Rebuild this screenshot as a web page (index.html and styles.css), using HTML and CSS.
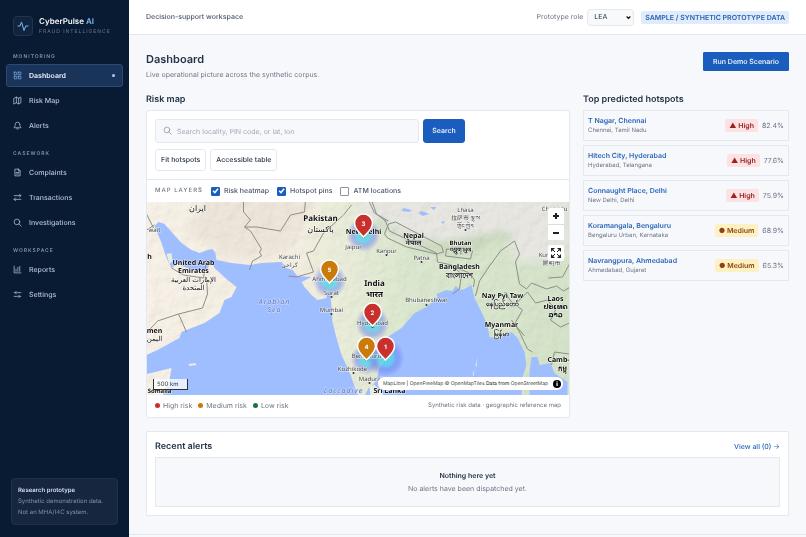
FILE: index.html
```html
<!DOCTYPE html>
<html lang="en">
<head>
<meta charset="utf-8">
<meta name="viewport" content="width=device-width, initial-scale=1">
<title>CyberPulse AI – Dashboard</title>
<link rel="stylesheet" href="styles.css">
</head>
<body>
<div class="app">
  <aside class="sidebar">
    <div class="brand">
      <span class="brand-mark"><svg class="icon" viewBox="0 0 24 24"><path d="M2 12h4l3-8 5 17 3.500-9H22"/></svg></span>
      <div>
        <div class="brand-name">CyberPulse <span>AI</span></div>
        <div class="brand-tag">FRAUD INTELLIGENCE</div>
      </div>
    </div>
    <nav>
      <section class="nav-group">
        <h2>MONITORING</h2>
        <a class="nav-item active" href="#"><svg class="icon" viewBox="0 0 24 24"><rect x="3" y="3" width="7" height="7" rx="1"/><rect x="14" y="3" width="7" height="7" rx="1"/><rect x="3" y="14" width="7" height="7" rx="1"/><rect x="14" y="14" width="7" height="7" rx="1"/></svg>Dashboard<i class="dot"></i></a>
        <a class="nav-item" href="#"><svg class="icon" viewBox="0 0 24 24"><path d="M3 6l6-3 6 3 6-3v15l-6 3-6-3-6 3zM9 3v15M15 6v15"/></svg>Risk Map</a>
        <a class="nav-item" href="#"><svg class="icon" viewBox="0 0 24 24"><path d="M18 9a6 6 0 0 0-12 0c0 6-3 7-3 9h18c0-2-3-3-3-9M10 21h4"/></svg>Alerts</a>
      </section>
      <section class="nav-group">
        <h2>CASEWORK</h2>
        <a class="nav-item" href="#"><svg class="icon" viewBox="0 0 24 24"><path d="M14 3H5v18h14V8zM14 3v5h5M8 12h8M8 16h8"/></svg>Complaints</a>
        <a class="nav-item" href="#"><svg class="icon" viewBox="0 0 24 24"><path d="M3 7h18M17 3l4 4-4 4M21 17H3M7 13l-4 4 4 4"/></svg>Transactions</a>
        <a class="nav-item" href="#"><svg class="icon" viewBox="0 0 24 24"><circle cx="10.500" cy="10.500" r="7.500"/><path d="M16 16l6 6"/></svg>Investigations</a>
      </section>
      <section class="nav-group">
        <h2>WORKSPACE</h2>
        <a class="nav-item" href="#"><svg class="icon" viewBox="0 0 24 24"><path d="M3 3v18h18M8 17v-6M13 17V6M18 17V4"/></svg>Reports</a>
        <a class="nav-item" href="#"><svg class="icon" viewBox="0 0 24 24"><path d="M3 7h5M12 7h9M3 17h9M16 17h5M8 4v6M16 14v6"/></svg>Settings</a>
      </section>
    </nav>
    <div class="notice">
      <strong>Research prototype</strong>
      <p>Synthetic demonstration data.<br>Not an MHA/I4C system.</p>
    </div>
  </aside>

  <div class="workspace">
    <header class="topbar">
      <span class="topbar-title">Decision-support workspace</span>
      <label class="role" for="role">Prototype role</label>
      <span class="select-wrap">
        <select id="role"><option>LEA</option></select>
        <svg class="chevron" viewBox="0 0 8 8"><path d="M1 2.500l3 3 3-3"/></svg>
      </span>
      <span class="data-badge">SAMPLE / SYNTHETIC PROTOTYPE DATA</span>
    </header>

    <main>
      <div class="page-head">
        <div>
          <h1>Dashboard</h1>
          <p>Live operational picture across the synthetic corpus.</p>
        </div>
        <button class="primary run" type="button">Run Demo Scenario</button>
      </div>

      <div class="columns">
        <section>
          <h2 class="section-title">Risk map</h2>
          <div class="card map-card">
            <div class="map-tools">
              <form class="search">
                <div class="search-box">
                  <svg class="icon" viewBox="0 0 24 24"><circle cx="10.500" cy="10.500" r="7.500"/><path d="M16 16l6 6"/></svg>
                  <input type="text" aria-label="Search locality" placeholder="Search locality, PIN code, or lat, lon">
                </div>
                <button class="primary" type="button">Search</button>
              </form>
              <div class="map-buttons">
                <button type="button">Fit hotspots</button>
                <button type="button">Accessible table</button>
              </div>
            </div>
            <div class="layers">
              <span class="layers-title">MAP LAYERS</span>
              <label><input type="checkbox" checked>Risk heatmap</label>
              <label><input type="checkbox" checked>Hotspot pins</label>
              <label><input type="checkbox">ATM locations</label>
            </div>
            <div class="map">
              <svg class="map-canvas" viewBox="0 0 423 193" preserveAspectRatio="xMidYMid slice" role="img" aria-label="Risk map of India">
                <defs>
                  <linearGradient id="land" x1="0" x2="1" y1="0" y2="0">
                    <stop offset="0" stop-color="#f8f2e8"/><stop offset=".34" stop-color="#f5f0e3"/>
                    <stop offset=".46" stop-color="#ebeedb"/><stop offset=".62" stop-color="#dce9d0"/><stop offset="1" stop-color="#d6e5ca"/>
                  </linearGradient>
                  <radialGradient id="heat">
                    <stop offset="0" stop-color="#4fe0e0" stop-opacity=".95"/><stop offset=".4" stop-color="#58c8ee" stop-opacity=".75"/>
                    <stop offset=".68" stop-color="#5a70ee" stop-opacity=".4"/><stop offset="1" stop-color="#5a60f0" stop-opacity="0"/>
                  </radialGradient>
                  <filter id="terrain" x="0" y="0" width="1" height="1">
                    <feTurbulence type="fractalNoise" baseFrequency=".09" numOctaves="5" seed="8"/>
                    <feDiffuseLighting lighting-color="#ffffff" surfaceScale="2"><feDistantLight azimuth="225" elevation="60"/></feDiffuseLighting>
                  </filter>
                  <filter id="soft"><feGaussianBlur stdDeviation="5"/></filter>
                  <g id="pin"><path d="M0 13C-3 9-9 6-9-1A9 9 0 0 1 9-1C9 6 3 9 0 13z" stroke="#fff" stroke-width="1.500"/></g>
                </defs>
                <rect width="423" height="193" fill="url(#land)"/>
                <path d="M205-5L218 15 235 22 250 35 275 43 300 44 330 42 355 32 372 60 398 60 423 50V-5z" fill="#e9e8e3" filter="url(#soft)"/>
                <path d="M226 24L245 28 270 46 295 50 330 48 350 38 368 38 360 30 330 36 290 42 260 35 235 18z" fill="#c3d6b6" filter="url(#soft)"/>
                <path d="M60-5H168L145 45 105 58 75 52 40 30z" fill="#efe7dc" filter="url(#soft)"/>
                <rect class="relief" width="423" height="193" filter="url(#terrain)"/>
                <g fill="#9fbeff">
                  <path d="M8 24L12 20 18 22 26 31 35 41 45 48 53 51 61 48 66 47 69 51 70 58 85 61 103 63 115 61 135 60 140 66 146 68 151 74 165 75 155 80 158 85 165 93 171 98 180 96 182 89 184 95 185 105 186 120 190 136 195 153 203 170 210 190 212 194H218L222 186 226 184 230 178 233 166 240 156 238 143 241 135 255 126 268 111 280 105 291 95 290 92 300 88 306 89 309 84 314 88 318 87 325 83 328 96 335 110 341 123 343 135 351 136 365 130 371 136 378 150 380 163 376 176 375 194H16L23 178 25 166 0 172V153L11 148 33 136 35 130 58 121 73 111 78 98 85 95 90 85 81 78 68 66 65 60 60 68 51 70 31 62 25 66 20 56 15 41z"/>
                  <path d="M383 194L383 170 385 155 391 155 393 163 404 161 408 171 421 180V194z"/>
                </g>
                <g fill="#e9eee0"><path d="M42 162l7-1 1 2-7 1zM224 194l-1-9 5-2 8 7 1 4zM331 155l-1 10-1-1zM328 167l-1 7-1-1zM332 177l6-2 4 2-3 1z"/><path d="M20 52l5-1 1 8-3 3z"/></g>
                <g fill="#9fbeff"><path d="M257 6l8 2-2 2-8-1zM275 9l8 3-7 2-4-3zM284 5h6l-3 3zM237 17l4 1-3 2zM294 20l4-1-1 3z"/></g>
                <g class="borders">
                  <path d="M97-2v12l7 8-6 7 6 4 11 18-2 3 2 4-9 5-3 9M98 25h12l24 4 10-16 14-3 1-12M205 3l-8 10-20 18-10 18-7 2 7 19-17 5-8-1M0 28l8-5M0 12l7 14M25 66l12 7 20 3 3-18M60 75l1 17-5 14-24 6-21 7-11 12M32 112l8 18M225-2l5 14 9 7 4 10 21 10 26 12 1 9 14 3 10 9-2 15-7 5M238 32l4-10 7-2 46 24 2 6-7 2-30-7-19-9zM300 47l26 2-2 8-25-3zM327 85l1-7-5-7-20-8M329 94l4-15 10-15 11-15 14-10 5 13-4 8 4 22 7 5 5-6 15 6 10-3 7 5 12-7M358 90l7 10 11 8-8 14 10 12M366 105l15-15 8 11 12-3 8 10-5 10 10 7 9-4M405 163l3-13 15 2M365 118l8 12 8 17 5 3M222-2l6 13 14 8M423 62l-7 13-14 1"/>
                </g>
                <g fill="url(#heat)"><circle cx="217" cy="33" r="17"/><circle cx="183" cy="79" r="17"/><circle cx="226" cy="122" r="17"/><circle cx="220" cy="157" r="16"/><circle cx="239" cy="156" r="19"/></g>
                <g class="labels">
                  <g class="country">
                    <text x="174" y="19">Pakistan</text><text x="174" y="30" class="arabic">پاکستان</text>
                    <text x="228" y="84">India</text><text x="228" y="95">भारत</text>
                    <text x="51" y="9" class="arabic">ایران</text>
                    <g class="small"><text x="47" y="63">United Arab</text><text x="47" y="71">Emirates</text><text x="47" y="80" class="arabic">الإمارات العربية</text><text x="47" y="88" class="arabic">المتحدة</text>
                    <text x="267" y="36">Nepal</text><text x="267" y="43">नेपाल</text><text x="313" y="67">Bangladesh</text><text x="313" y="76">বাংলাদেশ</text>
                    <text x="356" y="96">Nay Pyi Taw</text><text x="356" y="104">နေပြည်တော်</text><text x="355" y="125">Myanmar</text><text x="355" y="134">မြန်မာ</text>
                    <text x="409" y="99">Laos</text><text x="409" y="107">ປະເທດ</text><text x="409" y="115">ລາວ</text><text x="412" y="160">Camb-</text><text x="416" y="169">កម្ពុ</text><text x="243" y="191">Sri Lanka</text>
                    <text x="8" y="131">men</text><text x="8" y="139" class="arabic">اليمن</text><text x="3" y="57">h</text><text x="217" y="32">New Delhi</text></g>
                    <g class="tiny"><text x="314" y="43">Bhutan</text><text x="314" y="50">འབྲུག་ཡུལ</text><text x="13" y="191">Somalia</text></g>
                  </g>
                  <g class="city">
                    <text x="143" y="57">Karachi</text><text x="143" y="65" class="arabic">کراچی</text><text x="207" y="47">Jaipur</text><text x="240" y="51">Kanpur</text><text x="275" y="58">Patna</text>
                    <text x="183" y="79">Ahmedabad</text><text x="185" y="93">Surat</text><text x="185" y="110">Mumbai</text><text x="226" y="123">Hyderabad</text><text x="280" y="100">Bhubaneshwar</text>
                    <text x="220" y="156">Bengaluru</text><text x="206" y="169">Kozhikode</text><text x="224" y="179">Madurai</text><text x="319" y="10">Lhasa</text><text x="319" y="18">拉萨市 ལྷ་ས</text><text x="319" y="26">གྲོང་ཁྱེར</text>
                    <text x="408" y="9">Chengdu</text><text x="405" y="55">Kunming</text><text x="405" y="63">昆明市</text><text x="8" y="30">wait</text>
                  </g>
                  <g class="sea"><text x="128" y="102">Arabian</text><text x="128" y="110">Sea</text><text x="197" y="191">Laccadive</text></g>
                  <g fill="#333"><circle cx="217" cy="35" r="1"/><circle cx="183" cy="80" r="1"/><circle cx="185" cy="95" r="1"/><circle cx="185" cy="112" r="1"/><circle cx="226" cy="125" r="1"/><circle cx="220" cy="158" r="1"/><circle cx="280" cy="103" r="1"/><circle cx="240" cy="53" r="1"/><circle cx="275" cy="60" r="1"/><circle cx="223" cy="181" r="1"/><circle cx="207" cy="171" r="1"/><circle cx="319" cy="28" r="1"/></g>
                </g>
                <g class="pins">
                  <g transform="translate(217 22)"><use href="#pin" fill="#c9302c"/><text y="2">3</text></g>
                  <g transform="translate(183 68)"><use href="#pin" fill="#c97a0a"/><text y="2">5</text></g>
                  <g transform="translate(226 111)"><use href="#pin" fill="#c9302c"/><text y="2">2</text></g>
                  <g transform="translate(220 145)"><use href="#pin" fill="#c97a0a"/><text y="2">4</text></g>
                  <g transform="translate(239 145)"><use href="#pin" fill="#c9302c"/><text y="2">1</text></g>
                </g>
              </svg>
              <div class="map-controls">
                <div class="zoom"><button type="button" aria-label="Zoom in"><svg viewBox="0 0 16 16"><path d="M8 5v6M5 8h6"/></svg></button><button type="button" aria-label="Zoom out"><svg viewBox="0 0 16 16"><path d="M5 8h6"/></svg></button></div>
                <button class="full" type="button" aria-label="Fullscreen"><svg viewBox="0 0 16 16"><path d="M7 7L4 4M9 7l3-3M7 9l-3 3M9 9l3 3"/><path class="tips" d="M3 3h4L3 7zM9 3h4v4zM3 9l4 4H3zM13 9v4H9z"/></svg></button>
              </div>
              <span class="scale">500 km</span>
              <div class="attribution"><span><a href="#">MapLibre</a> | <a href="#">OpenFreeMap</a> <a href="#">© OpenMapTiles</a> Data from <a href="#">OpenStreetMap</a></span><i>i</i></div>
            </div>
            <div class="legend">
              <span class="key high">High risk</span><span class="key medium">Medium risk</span><span class="key low">Low risk</span>
              <span class="legend-note">Synthetic risk data · geographic reference map</span>
            </div>
          </div>
        </section>

        <section>
          <h2 class="section-title">Top predicted hotspots</h2>
          <ul class="hotspots">
            <li><div><a href="#">T Nagar, Chennai</a><small>Chennai, Tamil Nadu</small></div><span class="tag high">▲ High</span><span class="pct">82.4%</span></li>
            <li><div><a href="#">Hitech City, Hyderabad</a><small>Hyderabad, Telangana</small></div><span class="tag high">▲ High</span><span class="pct">77.6%</span></li>
            <li><div><a href="#">Connaught Place, Delhi</a><small>New Delhi, Delhi</small></div><span class="tag high">▲ High</span><span class="pct">75.9%</span></li>
            <li><div><a href="#">Koramangala, Bengaluru</a><small>Bengaluru Urban, Karnataka</small></div><span class="tag medium">● Medium</span><span class="pct">68.9%</span></li>
            <li><div><a href="#">Navrangpura, Ahmedabad</a><small>Ahmedabad, Gujarat</small></div><span class="tag medium">● Medium</span><span class="pct">65.3%</span></li>
          </ul>
        </section>
      </div>

      <section class="card alerts">
        <div class="alerts-head"><h2>Recent alerts</h2><a href="#">View all (0) →</a></div>
        <div class="empty"><strong>Nothing here yet</strong><p>No alerts have been dispatched yet.</p></div>
      </section>
    </main>
    <footer></footer>
  </div>
</div>
</body>
</html>
```
FILE: styles.css
```css
:root {
  --navy: #091a33;
  --blue: #1b5dbf;
  --ink: #263447;
  --muted: #6d7685;
  --line: #e4e8ef;
  --bg: #f6f8fc;
}
* { box-sizing: border-box; }
body { margin: 0; background: var(--bg); color: var(--ink); font: 7px/10px Inter, "Liberation Sans", sans-serif; text-rendering: geometricPrecision; }
h1, h2, p, ul { margin: 0; padding: 0; font-weight: 600; }
p, ul { font-weight: 400; }
a { color: inherit; text-decoration: none; }
button, input, select { font: inherit; color: inherit; text-rendering: inherit; }
button { padding: 0; border: 1px solid var(--line); border-radius: 3px; background: #fff; font-weight: 500; }
.icon { width: 9px; height: 9px; flex: none; fill: none; stroke: currentColor; stroke-width: 2; stroke-linecap: round; stroke-linejoin: round; }
.app { display: grid; grid-template-columns: 129px minmax(0, 1fr); min-height: 100vh; }

.sidebar { position: sticky; top: 0; height: 100vh; display: flex; flex-direction: column; padding: 16px 6px 12px; background: var(--navy); color: #b3c0d3; }
.brand { display: flex; align-items: center; gap: 6px; height: 20px; padding-left: 7px; margin-bottom: 16px; }
.brand-mark { display: grid; place-items: center; width: 20px; height: 20px; border: 1px solid #24344f; border-radius: 4px; background: #12233e; color: #79b8f5; }
.brand-mark .icon { width: 12px; height: 12px; }
.brand-name { color: #f4f7fc; font-size: 8px; line-height: 11px; font-weight: 600; }
.brand-name span { color: #83b9f5; }
.brand-tag { margin-top: 1px; color: #697991; font-size: 5px; line-height: 8px; letter-spacing: 1px; }
.nav-group { display: flex; flex-direction: column; gap: 2px; margin-bottom: 12px; }
.nav-group h2 { padding: 0 7px; color: #8391a7; font-size: 5px; line-height: 10px; letter-spacing: 1px; }
.nav-item { display: flex; align-items: center; gap: 7px; height: 23px; padding: 0 7px 0 6px; border: 1px solid transparent; border-radius: 3px; font-size: 7px; font-weight: 500; }
.nav-item.active { border-color: #274a76; background: #1a3459; color: #eaf1fb; font-weight: 600; }
.nav-item.active .icon { color: #79b0f0; }
.dot { width: 3px; height: 3px; margin-left: auto; border-radius: 50%; background: #a5cdfa; }
.notice { margin: auto 5px 0; padding: 6px; border: 1px solid #1f304b; border-radius: 4px; background: #16263f; color: #8190a6; font-size: 6px; line-height: 11px; }
.notice strong { color: #d5deea; font-weight: 600; }

.workspace { display: flex; flex-direction: column; }
.topbar { display: flex; align-items: center; height: 35px; padding: 0 17px; border-bottom: 1px solid var(--line); background: #fff; }
.topbar-title { margin-right: auto; color: #4a5566; font-weight: 500; }
.role { margin-right: 4px; color: var(--muted); }
.select-wrap { position: relative; margin-right: 7px; }
.select-wrap select { appearance: none; display: block; width: 47px; height: 17px; padding: 0 6px; border: 1px solid var(--line); border-radius: 4px; background: #f7f9fb; color: #263447; }
.chevron { position: absolute; top: 6px; right: 3px; width: 5px; height: 5px; fill: none; stroke: #111; stroke-width: 2; pointer-events: none; }
.data-badge { padding: 2px 4px; border-radius: 2px; background: #e0ecfb; color: #2862b2; line-height: 9px; font-weight: 600; }

main { flex: 1; padding: 17px 17px 16px 17px; }
.page-head { display: flex; justify-content: space-between; align-items: flex-start; height: 38px; }
.page-head h1 { font-size: 11px; line-height: 14px; }
.page-head p { margin-top: 4px; color: var(--muted); }
.primary { border-color: var(--blue); background: var(--blue); color: #fff; }
.run { height: 19px; padding: 0 9px; border-radius: 1px; }
.columns { display: grid; grid-template-columns: minmax(0, 1fr) 206px; gap: 13px; }
.section-title { height: 20px; font-size: 9px; line-height: 20px; }
.card { border: 1px solid var(--line); border-radius: 3px; background: #fff; }
.map-card { overflow: hidden; }
.map-tools { padding: 8px; border-bottom: 1px solid var(--line); }
.search { display: flex; gap: 4px; }
.search-box { position: relative; flex: 0 1 264px; }
.search-box .icon { position: absolute; top: 7px; left: 8px; color: #8893a3; }
.search-box input { width: 100%; height: 24px; padding: 0 6px 0 21px; border: 1px solid var(--line); border-radius: 3px; background: var(--bg); }
.search-box input::placeholder { color: #a2aab6; }
.search .primary { width: 42px; height: 24px; }
.map-buttons { display: flex; gap: 4px; margin-top: 6px; }
.map-buttons button { height: 22px; padding: 0 5px; }
.layers { display: flex; align-items: center; gap: 8px; height: 22px; padding: 0 8px; color: #4a5566; font-weight: 500; }
.layers-title { font-size: 6px; letter-spacing: 1px; color: var(--muted); }
.layers label { display: flex; align-items: center; gap: 4px; }
.layers input { appearance: none; display: grid; place-items: center; width: 9px; height: 9px; margin: 0; border: 1px solid #8b929c; border-radius: 1px; background: #fff; }
.layers input:checked { border-color: var(--blue); background: var(--blue); }
.layers input:checked::after { content: ""; width: 7px; height: 7px; background: #fff; clip-path: polygon(8% 55%, 24% 40%, 40% 58%, 78% 12%, 95% 26%, 42% 88%); }

.map { position: relative; height: 193px; overflow: hidden; }
.map-canvas { display: block; width: 100%; height: 100%; }
.relief { mix-blend-mode: multiply; opacity: .22; }
.borders path { fill: none; stroke: #8e8e88; stroke-width: 1; }
.labels { font-family: "Noto Sans", "DejaVu Sans", "Noto Sans CJK SC", sans-serif; text-anchor: middle; stroke: #ffffffb0; stroke-width: 1; }
.labels text { paint-order: stroke; }
.labels circle { stroke: none; }
.country { fill: #111; font-size: 8px; font-weight: 700; }
.country .small { font-size: 7px; }
.country .tiny { font-size: 6px; }
.labels .arabic { font-family: "DejaVu Sans", sans-serif; font-weight: 400; }
.city { fill: #3c3c40; font-size: 6px; }
.labels .sea { fill: #5573b5; font-size: 7px; font-style: italic; letter-spacing: 1px; stroke: #d5e1ff; }
.pins text { fill: #fff; font: 700 6px Inter, sans-serif; text-anchor: middle; }
.map-controls { position: absolute; top: 6px; right: 5px; width: 16px; }
.map-controls button { display: block; width: 16px; height: 16px; border: 0; border-radius: 2px; }
.zoom { margin-bottom: 5px; border-radius: 2px; background: #fff; }
.zoom button + button { border-top: 1px solid #ddd; border-radius: 0 0 2px 2px; }
.map-controls svg { display: block; width: 16px; height: 16px; fill: none; stroke: #222; stroke-width: 2; }
.map-controls .full svg { stroke-width: 1; }
.map-controls .tips { fill: #222; stroke: none; }
.scale { position: absolute; left: 6px; bottom: 5px; width: 35px; height: 11px; padding: 0 3px; border: solid #333; border-width: 0 1px 1px; background: #ffffffc0; font-size: 6px; line-height: 11px; }
.attribution { position: absolute; right: 6px; bottom: 5px; display: flex; align-items: center; height: 13px; padding: 0 2px 0 5px; border-radius: 6px; background: #fff; color: #111; font-size: 5px; white-space: nowrap; }
.attribution a { color: #444; }
.attribution i { width: 8px; height: 8px; margin-left: 5px; border-radius: 50%; background: #000; color: #fff; font: 700 7px/8px "Liberation Serif", serif; text-align: center; }
.legend { display: flex; align-items: center; gap: 6px; height: 22px; padding: 0 8px; color: var(--muted); }
.key::before { content: ""; display: inline-block; width: 5px; height: 5px; margin-right: 3px; border-radius: 50%; background: #c9302c; }
.key.medium::before { background: #c97a0a; }
.key.low::before { background: #167548; }
.legend-note { margin-left: auto; font-size: 6px; }

.hotspots { display: flex; flex-direction: column; gap: 4px; list-style: none; }
.hotspots li { display: flex; align-items: center; gap: 4px; height: 31px; padding: 0 4px; border: 1px solid var(--line); }
.hotspots div { margin-right: auto; }
.hotspots a { display: block; color: #2b67b9; line-height: 10px; font-weight: 600; }
.hotspots small { display: block; color: var(--muted); font-size: 6px; line-height: 10px; }
.tag { padding: 2px 4px; border-radius: 2px; line-height: 9px; font-weight: 600; }
.tag.high { background: #fce2e2; color: #9c2222; }
.tag.medium { background: #fdf1c4; color: #8e440e; }
.pct { color: var(--muted); }

.alerts { margin-top: 13px; padding: 8px; border-radius: 1px; }
.alerts-head { display: flex; align-items: center; justify-content: space-between; height: 14px; margin-bottom: 3px; }
.alerts-head h2 { font-size: 9px; }
.alerts-head a { color: #2b67b9; font-weight: 500; }
.empty { padding: 11px 8px; border: 1px solid var(--line); background: var(--bg); text-align: center; line-height: 13px; }
.empty strong { font-weight: 600; }
.empty p { color: var(--muted); }
footer { height: 3px; border-top: 1px solid var(--line); }
```
